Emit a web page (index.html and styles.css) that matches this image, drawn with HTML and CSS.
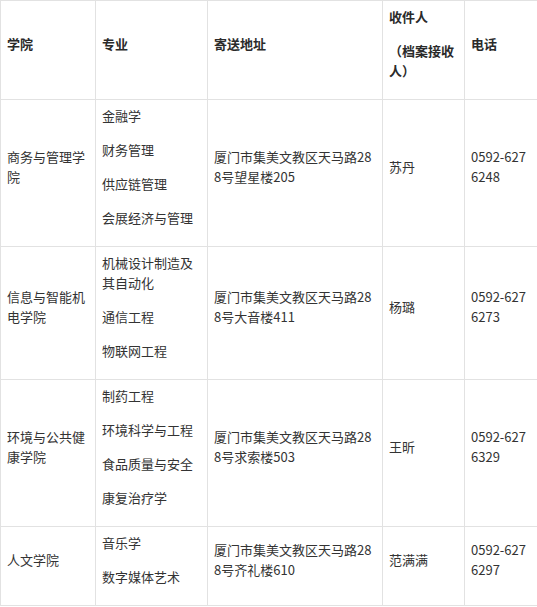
FILE: index.html
```html
<!DOCTYPE html>
<html lang="zh-CN">
<head>
<meta charset="utf-8">
<title>档案寄送地址</title>
<link rel="stylesheet" href="styles.css">
</head>
<body>
<table class="addr-table">
  <colgroup>
    <col class="c-college">
    <col class="c-major">
    <col class="c-addr">
    <col class="c-person">
    <col class="c-phone">
  </colgroup>
  <thead>
    <tr>
      <th><p>学院</p></th>
      <th><p>专业</p></th>
      <th><p>寄送地址</p></th>
      <th><p>收件人</p><p>（档案接收人）</p></th>
      <th class="phone"><p>电话</p></th>
    </tr>
  </thead>
  <tbody>
    <tr>
      <td><p>商务与管理学院</p></td>
      <td><p>金融学</p><p>财务管理</p><p>供应链管理</p><p>会展经济与管理</p></td>
      <td><p>厦门市集美文教区天马路288号望星楼205</p></td>
      <td><p>苏丹</p></td>
      <td class="phone"><p>0592-6276248</p></td>
    </tr>
    <tr>
      <td><p>信息与智能机电学院</p></td>
      <td><p>机械设计制造及其自动化</p><p>通信工程</p><p>物联网工程</p></td>
      <td><p>厦门市集美文教区天马路288号大音楼411</p></td>
      <td><p>杨璐</p></td>
      <td class="phone"><p>0592-6276273</p></td>
    </tr>
    <tr>
      <td><p>环境与公共健康学院</p></td>
      <td><p>制药工程</p><p>环境科学与工程</p><p>食品质量与安全</p><p>康复治疗学</p></td>
      <td><p>厦门市集美文教区天马路288号求索楼503</p></td>
      <td><p>王昕</p></td>
      <td class="phone"><p>0592-6276329</p></td>
    </tr>
    <tr>
      <td><p>人文学院</p></td>
      <td><p>音乐学</p><p>数字媒体艺术</p></td>
      <td><p>厦门市集美文教区天马路288号齐礼楼610</p></td>
      <td><p>范满满</p></td>
      <td class="phone"><p>0592-6276297</p></td>
    </tr>
  </tbody>
</table>
</body>
</html>
```
FILE: styles.css
```css
html, body {
  margin: 0;
  padding: 0;
  background: #ffffff;
  overflow: hidden;
}

body {
  font-family: "Noto Sans CJK SC", "Noto Sans", sans-serif;
  font-size: 13px;
  color: #333333;
}

.addr-table {
  border-collapse: collapse;
  table-layout: fixed;
  width: 560px;
}

.c-college { width: 95px; }
.c-major { width: 112px; }
.c-addr { width: 175px; }
.c-person { width: 82px; }
.c-phone { width: 96px; }

.addr-table th,
.addr-table td {
  border: 1px solid #e2e2e2;
  padding: 6px 6px 4px 6px;
  vertical-align: middle;
  text-align: left;
  word-break: break-all;
  line-height: 20px;
}

.addr-table th {
  font-weight: bold;
  color: #2a2a2a;
}

.addr-table .phone {
  padding-right: 30px;
}

.addr-table p {
  margin: 0 0 14px 0;
}
```
